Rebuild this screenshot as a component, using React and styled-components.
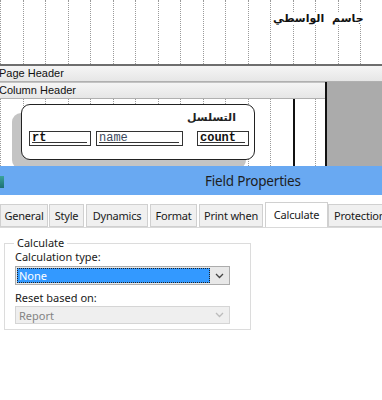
import styled, { createGlobalStyle } from "styled-components";

const GlobalStyle = createGlobalStyle`
  html, body {
    margin: 0;
    padding: 0;
    background: #ffffff;
    overflow: hidden;
  }
  body {
    font-family: "Noto Sans", "Liberation Sans", sans-serif;
  }
`;

const gridCols = Array.from({ length: 19 });

const Page = styled.div`
  width: 382px;
  height: 400px;
  display: flex;
  flex-direction: column;
  background: #fff;
  overflow: hidden;
`;

const Designer = styled.div`
  display: flex;
  flex-direction: column;
  height: 166px;
  flex-shrink: 0;
`;

const Grid = styled.div`
  position: absolute;
  inset: 0;
  display: flex;
  pointer-events: none;
`;

const GridCol = styled.div`
  width: 21.5px;
  flex-shrink: 0;
  border-left: 1px dotted #9a9a9a;
`;

const Band = styled.div`
  position: relative;
  height: ${(p) => p.h}px;
  background: #fff;
  overflow: hidden;
`;

const TitleText = styled.div`
  position: absolute;
  left: 271px;
  top: 12px;
  font-family: "DejaVu Sans", sans-serif;
  font-weight: 700;
  font-size: 11px;
  word-spacing: 4px;
  color: #111;
  direction: rtl;
  background: #fff;
  padding: 0 2px;
`;

const BandHeader = styled.div`
  height: 15px;
  line-height: 15px;
  font-family: "Liberation Sans", sans-serif;
  font-size: 11px;
  color: #111;
  text-indent: -1px;
  background: linear-gradient(#f5f5f5, #e6e6e6);
  border-top: 1px solid #c4c4c4;
  border-bottom: 1px solid #b0b0b0;
`;

const PageHeader = styled(BandHeader)`
  border-top: 2px solid #6e6e6e;
`;

const DetailRow = styled.div`
  display: flex;
  flex: 1;
`;

const DetailArea = styled.div`
  display: flex;
  flex-direction: column;
  width: 325px;
  flex-shrink: 0;
  border-right: 2px solid #111;
`;

const GreyArea = styled.div`
  flex: 1;
  background: #ababab;
`;

const Canvas = styled.div`
  position: relative;
  flex: 1;
  overflow: hidden;
`;

const VLine = styled.div`
  position: absolute;
  left: 293px;
  top: 0;
  bottom: 0;
  width: 2px;
  background: #111;
`;

const Frame = styled.div`
  position: absolute;
  left: 21px;
  top: 5px;
  width: 232px;
  height: 54px;
  border: 1px solid #222;
  border-radius: 9px;
  background: #fff;
  box-shadow: -9px 9px 0 #c4c4c4;
`;

const FrameCaption = styled.div`
  position: absolute;
  right: 18px;
  top: 6px;
  font-family: "DejaVu Sans", sans-serif;
  font-weight: 700;
  font-size: 11px;
  color: #222;
  direction: rtl;
`;

const Field = styled.div`
  position: absolute;
  left: ${(p) => p.x}px;
  top: 26px;
  width: ${(p) => p.w}px;
  height: 15px;
  border: 1px solid #333;
  box-sizing: border-box;
  font-family: "Liberation Mono", monospace;
  font-size: 12px;
  font-weight: ${(p) => (p.$bold ? 700 : 400)};
  color: ${(p) => (p.$bold ? "#111" : "#3d4a60")};
  padding: 0 3px 0 2px;
  overflow: hidden;
  white-space: nowrap;
`;

const Underlined = styled.div`
  height: 10px;
  line-height: 12px;
  border-bottom: 1px solid #333;
  overflow: visible;
`;

const TitleBar = styled.div`
  height: 29px;
  flex-shrink: 0;
  display: flex;
  align-items: center;
  background: #69a9f2;
  font-family: "Noto Sans", "Open Sans", sans-serif;
  font-size: 13.5px;
  color: #1d1d1d;
`;

const AppIcon = styled.div`
  width: 4px;
  height: 12px;
  background: linear-gradient(#3aa39a, #1d6f73);
  margin-top: 2px;
`;

const Title = styled.div`
  margin-left: 201px;
  letter-spacing: -0.2px;
`;

const TabStrip = styled.div`
  display: flex;
  align-items: flex-end;
  height: 32px;
  flex-shrink: 0;
  border-bottom: 1px solid #d9d9d9;
  background: #fff;
  overflow: hidden;
`;

const Tab = styled.div`
  width: ${(p) => p.w}px;
  margin-left: ${(p) => p.gap}px;
  flex-shrink: 0;
  height: ${(p) => (p.$active ? 26 : 23)}px;
  margin-bottom: ${(p) => (p.$active ? -1 : 0)}px;
  box-sizing: border-box;
  border: 1px solid #d0d0d0;
  border-bottom: ${(p) => (p.$active ? "none" : "1px solid #d0d0d0")};
  background: ${(p) => (p.$active ? "#fff" : "#f0f0f0")};
  font-family: "Noto Sans", "Open Sans", sans-serif;
  font-size: 11px;
  letter-spacing: -0.2px;
  color: #1a1a1a;
  display: flex;
  align-items: ${(p) => (p.$active ? "flex-start" : "center")};
  padding-top: ${(p) => (p.$active ? 4 : 0)}px;
  justify-content: ${(p) => (p.$start ? "flex-start" : "center")};
  padding-left: ${(p) => (p.$start ? 5 : 0)}px;
  white-space: nowrap;
`;

const Panel = styled.div`
  flex: 1;
  padding: 9px 0 0 4px;
  background: #fff;
`;

const GroupBox = styled.fieldset`
  width: 247px;
  height: 93px;
  box-sizing: border-box;
  margin: 0;
  padding: 0 0 0 10px;
  border: 1px solid #dcdcdc;
  font-family: "Noto Sans", "Open Sans", sans-serif;
  font-size: 11px;
  color: #1a1a1a;
`;

const Legend = styled.legend`
  padding: 0 3px;
  margin-left: -1px;
  line-height: 12px;
`;

const Label = styled.div`
  line-height: 13px;
  margin-top: ${(p) => p.mt}px;
  margin-bottom: ${(p) => p.mb}px;
`;

const Select = styled.div`
  width: 215px;
  height: ${(p) => (p.$disabled ? 18 : 19)}px;
  box-sizing: border-box;
  display: flex;
  align-items: center;
  border: 1px solid ${(p) => (p.$disabled ? "#d5d5d5" : "#acacac")};
  background: ${(p) => (p.$disabled ? "#efefef" : "#e8e8e8")};
  padding: 1px;
`;

const SelectValue = styled.div`
  flex: 1;
  height: 100%;
  box-sizing: border-box;
  display: flex;
  align-items: center;
  padding-left: 2px;
  background: ${(p) => (p.$disabled ? "transparent" : "#3399ff")};
  color: ${(p) => (p.$disabled ? "#838383" : "#fff")};
  outline: ${(p) => (p.$disabled ? "none" : "1px dotted #222")};
  outline-offset: -1px;
`;

const DropButton = styled.div`
  width: 17px;
  height: 100%;
  display: flex;
  align-items: center;
  justify-content: center;
  margin-left: 1px;
`;

function Chevron({ color }) {
  return (
    <svg width="9" height="6" viewBox="0 0 9 6">
      <path d="M1 1 L4.5 4.5 L8 1" fill="none" stroke={color} strokeWidth="1.3" />
    </svg>
  );
}

const tabs = [
  { label: "General", w: 48, gap: 0 },
  { label: "Style", w: 35, gap: 1 },
  { label: "Dynamics", w: 62, gap: 2 },
  { label: "Format", w: 47, gap: 2 },
  { label: "Print when", w: 64, gap: 2 },
  { label: "Calculate", w: 63, gap: 2, active: true },
  { label: "Protection", w: 64, gap: 0, start: true },
];

export default function App() {
  return (
    <Page>
      <GlobalStyle />
      <Designer>
        <Band h={64}>
          <Grid>
            {gridCols.map((_, i) => (
              <GridCol key={i} />
            ))}
          </Grid>
          <TitleText>جاسم الواسطي</TitleText>
        </Band>
        <PageHeader>Page Header</PageHeader>
        <DetailRow>
          <DetailArea>
            <BandHeader>Column Header</BandHeader>
            <Canvas>
              <Grid>
                {gridCols.map((_, i) => (
                  <GridCol key={i} />
                ))}
              </Grid>
              <VLine />
              <Frame>
                <FrameCaption>التسلسل</FrameCaption>
                <Field x={7} w={62} $bold>
                  <Underlined>rt</Underlined>
                </Field>
                <Field x={74} w={87}>
                  <Underlined>name</Underlined>
                </Field>
                <Field x={175} w={52} $bold>
                  <Underlined>count</Underlined>
                </Field>
              </Frame>
            </Canvas>
          </DetailArea>
          <GreyArea />
        </DetailRow>
      </Designer>
      <TitleBar>
        <AppIcon />
        <Title>Field Properties</Title>
      </TitleBar>
      <TabStrip>
        {tabs.map((t) => (
          <Tab key={t.label} w={t.w} gap={t.gap} $active={t.active} $start={t.start}>
            {t.label}
          </Tab>
        ))}
      </TabStrip>
      <Panel>
        <GroupBox>
          <Legend>Calculate</Legend>
          <Label mt={1} mb={3}>Calculation type:</Label>
          <Select>
            <SelectValue>None</SelectValue>
            <DropButton>
              <Chevron color="#444" />
            </DropButton>
          </Select>
          <Label mt={6} mb={2}>Reset based on:</Label>
          <Select $disabled>
            <SelectValue $disabled>Report</SelectValue>
            <DropButton>
              <Chevron color="#bcbcbc" />
            </DropButton>
          </Select>
        </GroupBox>
      </Panel>
    </Page>
  );
}
